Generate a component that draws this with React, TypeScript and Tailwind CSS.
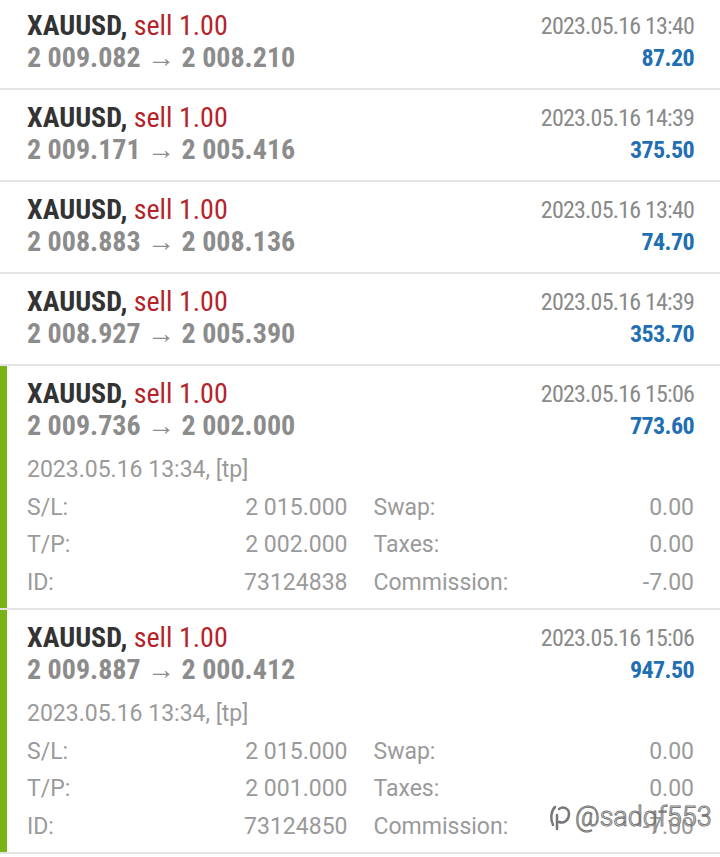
import React from "react";

type Deal = {
    open: string;
    close: string;
    time: string;
    profit: string;
    details?: {
        openTime: string;
        sl: string;
        tp: string;
        id: string;
    };
};

const deals: Deal[] = [
    { open: "2 009.082", close: "2 008.210", time: "2023.05.16 13:40", profit: "87.20" },
    { open: "2 009.171", close: "2 005.416", time: "2023.05.16 14:39", profit: "375.50" },
    { open: "2 008.883", close: "2 008.136", time: "2023.05.16 13:40", profit: "74.70" },
    { open: "2 008.927", close: "2 005.390", time: "2023.05.16 14:39", profit: "353.70" },
    {
        open: "2 009.736",
        close: "2 002.000",
        time: "2023.05.16 15:06",
        profit: "773.60",
        details: { openTime: "2023.05.16 13:34, [tp]", sl: "2 015.000", tp: "2 002.000", id: "73124838" },
    },
    {
        open: "2 009.887",
        close: "2 000.412",
        time: "2023.05.16 15:06",
        profit: "947.50",
        details: { openTime: "2023.05.16 13:34, [tp]", sl: "2 015.000", tp: "2 001.000", id: "73124850" },
    },
];

const DetailPair = ({ label, value }: { label: string; value: string }) => (
    <div className="flex justify-between">
        <span>{label}</span>
        <span>{value}</span>
    </div>
);

const DealRow = ({ deal }: { deal: Deal }) => {
    const expanded = !!deal.details;
    return (
        <div
            className={
                expanded
                    ? "border-l-[7px] border-[#7ab317] pl-[20px] pr-[26px] pt-[12px] pb-[7px]"
                    : "pl-[27px] pr-[26px] pt-[12px] pb-[14px]"
            }
        >
            {/* condensed header, like the terminal's Roboto Condensed */}
            <div className="flex justify-between [font-stretch:75%]">
                <div className="font-bold">
                    <div className="text-[28px] leading-[32px] text-[#333]">
                        XAUUSD, <span className="font-normal text-[#b5232b]">sell 1.00</span>
                    </div>
                    <div className="text-[28px] leading-[32px] text-[#8c8c8c]">
                        {deal.open} → {deal.close}
                    </div>
                </div>
                <div className="flex flex-col items-end">
                    <div className="text-[24px] leading-[32px] tracking-[-0.8px] text-[#8a8a8a]">{deal.time}</div>
                    <div className="text-[24px] leading-[32px] font-bold tracking-[-0.6px] text-[#1f6fb2]">
                        {deal.profit}
                    </div>
                </div>
            </div>
            {deal.details && (
                <div className="mt-[9px] text-[23px] leading-[37.5px] text-[#9a9a9a]">
                    <div>{deal.details.openTime}</div>
                    <div className="grid grid-cols-2 gap-x-[26px]">
                        <DetailPair label="S/L:" value={deal.details.sl} />
                        <DetailPair label="Swap:" value="0.00" />
                        <DetailPair label="T/P:" value={deal.details.tp} />
                        <DetailPair label="Taxes:" value="0.00" />
                        <DetailPair label="ID:" value={deal.details.id} />
                        <DetailPair label="Commission:" value="-7.00" />
                    </div>
                </div>
            )}
        </div>
    );
};

export default function App() {
    return (
        <div className="relative w-[720px] h-[857px] overflow-hidden bg-white font-['Roboto',sans-serif]">
            <div className="-mt-[2px]">
                {deals.map((deal, i) => (
                    <div key={i} className="border-b-2 border-[#e4e4e4]">
                        <DealRow deal={deal} />
                    </div>
                ))}
            </div>
            <div className="absolute left-[548px] top-[800px] flex items-center gap-[3px] text-[27px] leading-[34px] text-white [-webkit-text-stroke:1px_#777] font-light">
                <svg width="24" height="30" viewBox="0 0 24 30" fill="none" stroke="#777" strokeWidth="2.5" strokeLinecap="round">
                    <path d="M7 5 C3 9 2 17 5 23 M11 7 C15 4 21 6 21 12 C21 18 16 22 11 20 M9 13 L9 27" />
                </svg>
                <span>@sadqf553</span>
            </div>
        </div>
    );
}
